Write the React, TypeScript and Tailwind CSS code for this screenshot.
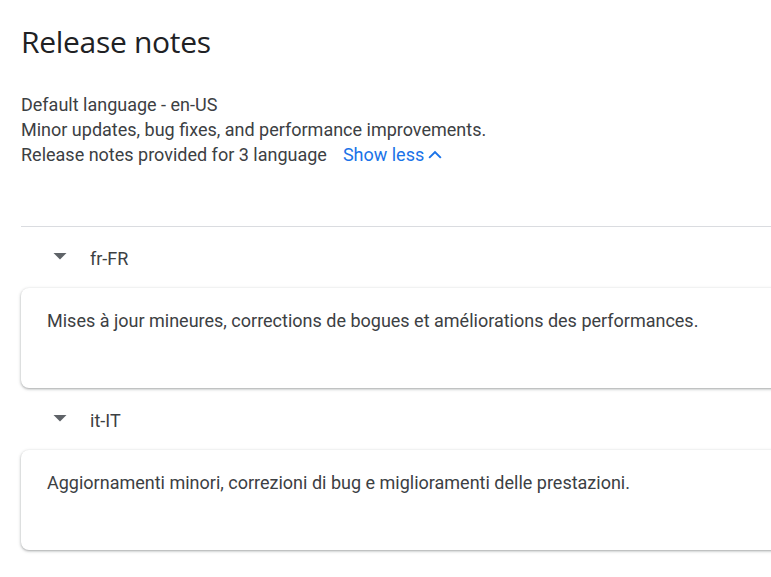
import React from 'react';

const notes = [
  {
    lang: 'fr-FR',
    text: 'Mises à jour mineures, corrections de bogues et améliorations des performances.',
  },
  {
    lang: 'it-IT',
    text: 'Aggiornamenti minori, correzioni di bug e miglioramenti delle prestazioni.',
  },
];

const DropArrow = () => (
  <svg width="24" height="24" viewBox="0 0 24 24" className="text-[#5f6368]">
    <path d="M5.5 7l6.5 6.5 6.5-6.5z" fill="currentColor" />
  </svg>
);

const App: React.FC = () => {
  return (
    <div className="w-[771px] h-[577px] overflow-hidden bg-white">
      <div className="w-[900px] pl-[21px] font-['Roboto',sans-serif]">
        <h1 className="mt-[24px] text-[30px] leading-[36px] text-[#202124] font-['Open_Sans',sans-serif] tracking-[-0.3px]">
          Release notes
        </h1>

        <div className="mt-[32px] text-[18px] leading-[25px] text-[#3c4043]">
          <div>Default language - en-US</div>
          <div>Minor updates, bug fixes, and performance improvements.</div>
          <div className="flex items-center">
            <span>Release notes provided for 3 language</span>
            <button className="ml-[16px] flex items-center text-[#1a73e8]">
              Show less
              <svg width="20" height="20" viewBox="0 0 24 24" className="ml-[1px]">
                <path
                  d="M5 15.5l7-7 7 7"
                  fill="none"
                  stroke="currentColor"
                  strokeWidth="2.4"
                />
              </svg>
            </button>
          </div>
        </div>

        <div className="mt-[59px] border-t border-[#dadce0]" />

        {notes.map((n) => (
          <div key={n.lang}>
            <div className="h-[61px] flex items-center pl-[27px] pt-[1px]">
              <DropArrow />
              <span className="ml-[18px] text-[18px] text-[#3c4043]">{n.lang}</span>
            </div>
            <div className="h-[100px] mb-[1px] rounded-[8px] bg-white pl-[26px] pt-[21px] text-[18px] leading-[24px] text-[#3c4043] shadow-[0_1px_2px_0_rgba(60,64,67,0.3),0_1px_3px_1px_rgba(60,64,67,0.15)]">
              {n.text}
            </div>
          </div>
        ))}
      </div>
    </div>
  );
};

export default App;
